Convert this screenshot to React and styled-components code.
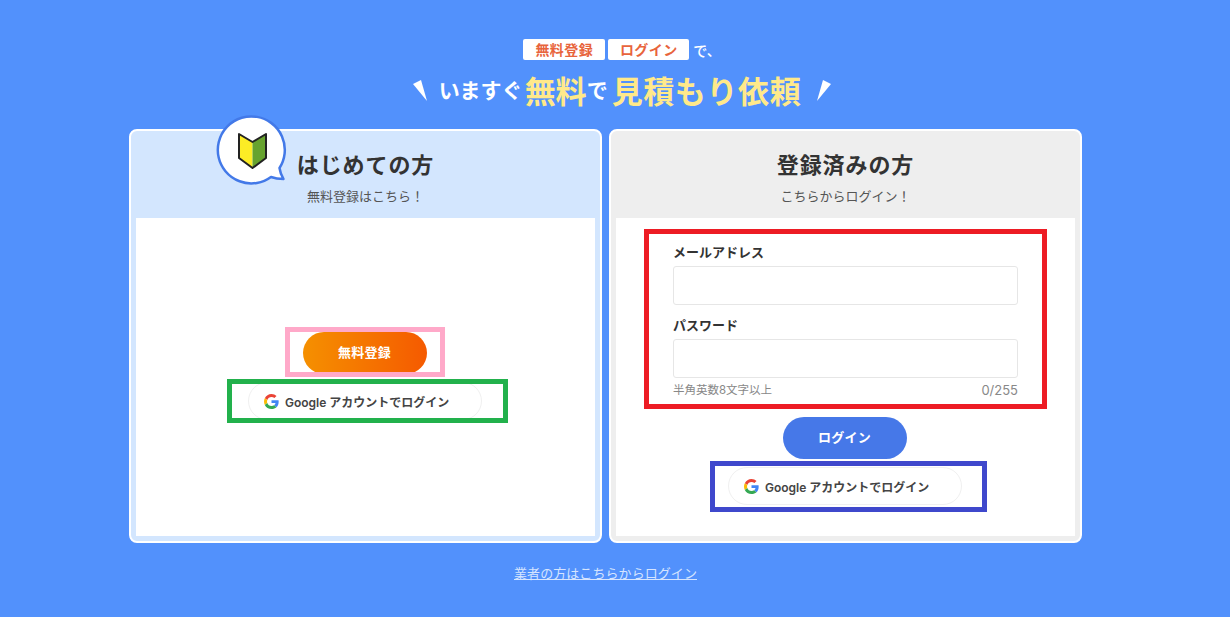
import styled, { createGlobalStyle } from 'styled-components';

const GlobalStyle = createGlobalStyle`
  html, body {
    margin: 0;
    padding: 0;
    background: #5291fc;
  }
  * {
    box-sizing: border-box;
  }
  body {
    font-family: Inter, "Noto Sans CJK JP", "Noto Sans", sans-serif;
    color: #333;
  }
`;

const Page = styled.div`
  width: 1230px;
  height: 617px;
  overflow: hidden;
  padding: 39px 19px 0 0;
  display: flex;
  flex-direction: column;
  align-items: center;
`;

const Intro = styled.div`
  display: flex;
  flex-direction: column;
  align-items: center;
  margin-left: 33px;
`;

const LeadRow = styled.div`
  display: flex;
  align-items: center;
  gap: 3px;
  height: 21px;
  color: #fff;
  font-size: 14px;
  font-weight: 500;
`;

const Tag = styled.span`
  width: ${(p) => p.$width}px;
  height: 21px;
  line-height: 21px;
  background: #fff;
  border-radius: 2px;
  color: #e8643c;
  font-weight: 700;
  text-align: center;
  letter-spacing: 0.03em;
`;

const LeadSuffix = styled.span`
  margin-left: 1px;
`;

const Headline = styled.div`
  display: flex;
  align-items: center;
  height: 34px;
  margin-top: 12px;
  color: #fff;
  font-weight: 700;
  white-space: nowrap;
`;

const Small = styled.span`
  font-size: 21px;
`;

const Big = styled.span`
  font-size: 31px;
  letter-spacing: ${(p) => p.$spacing || 0}em;
  color: #ffe98a;
  margin-left: ${(p) => p.$gap || 0}px;
`;

const Spark = styled.svg`
  width: 14px;
  height: 21px;
  margin: ${(p) => (p.$right ? '3px 0 0 16px' : '3px 12px 0 0')};
`;

const Cards = styled.div`
  display: flex;
  gap: 7px;
  margin-top: 23px;
`;

const Card = styled.section`
  position: relative;
  width: 473px;
  height: 414px;
  border: 2px solid #fff;
  border-radius: 8px;
  padding: 0 5px 5px;
  background: ${(p) => p.$tint};
  display: flex;
  flex-direction: column;
`;

const CardHead = styled.header`
  height: 87px;
  padding-top: 19px;
  text-align: center;
`;

const Title = styled.h2`
  margin: 0;
  height: 30px;
  line-height: 30px;
  font-size: 22px;
  font-weight: 700;
  letter-spacing: 0.04em;
  color: #333;
`;

const Sub = styled.p`
  margin: 6px 0 0;
  font-size: 13px;
  line-height: 20px;
  color: #555;
`;

const CardBody = styled.div`
  flex: 1;
  background: #fff;
  display: flex;
  flex-direction: column;
  align-items: center;
  padding-top: ${(p) => p.$top}px;
`;

const Badge = styled.svg`
  position: absolute;
  left: 85px;
  top: -17px;
  width: 74px;
  height: 72px;
`;

const Outline = styled.div`
  flex: none;
  border: 5px solid ${(p) => p.$color};
  width: ${(p) => p.$width}px;
  height: ${(p) => p.$height}px;
  margin: ${(p) => p.$top || 0}px 0 0 ${(p) => p.$nudge || 0}px;
  overflow: hidden;
  display: flex;
  justify-content: center;
  align-items: flex-start;
`;

const PillButton = styled.button`
  flex: none;
  width: 124px;
  height: 42px;
  margin: ${(p) => p.$top || 0}px 0 0 ${(p) => p.$nudge || 0}px;
  padding: 0 0 3px;
  border: 0;
  border-radius: 21px;
  background: ${(p) => p.$fill};
  color: #fff;
  font-family: inherit;
  font-size: 13px;
  font-weight: 700;
  letter-spacing: 0.02em;
  cursor: pointer;
`;

const GoogleButton = styled.button`
  flex: none;
  width: 234px;
  height: 38px;
  margin: ${(p) => p.$top || 0}px 0 0 ${(p) => p.$shift || 0}px;
  padding: 0 0 0 15px;
  border: 1px solid #f0f0f0;
  border-radius: 19px;
  background: #fff;
  display: flex;
  align-items: center;
  gap: 6px;
  color: #444;
  font-family: inherit;
  font-size: 12px;
  font-weight: 600;
  cursor: pointer;
`;

const Fields = styled.div`
  padding: 9px 23px 0 24px;
  width: 100%;
`;

const Label = styled.label`
  display: block;
  height: 19px;
  line-height: 19px;
  font-size: 13px;
  font-weight: 700;
  color: #333;
  margin-top: ${(p) => p.$top || 0}px;
`;

const Input = styled.input`
  display: block;
  width: 345px;
  height: 39px;
  margin-top: 4px;
  border: 1px solid #e6e6e6;
  border-radius: 3px;
  background: #fff;
  outline: none;
`;

const Hint = styled.div`
  display: flex;
  justify-content: space-between;
  align-items: center;
  width: 345px;
  margin-top: 4px;
  font-size: 11.5px;
  line-height: 17px;
  color: #888;
`;

const Counter = styled.span`
  font-size: 13px;
`;

const FootLink = styled.a`
  margin-top: 21px;
  font-size: 13px;
  line-height: 19px;
  letter-spacing: 0.07px;
  color: #d5e4ff;
  text-decoration: underline;
`;

function GoogleMark() {
  return (
    <svg width="15" height="15" viewBox="0 0 48 48">
      <path fill="#EA4335" d="M24 9.500c3.500 0 6.700 1.200 9.200 3.600l6.900-6.900C35.900 2.400 30.500 0 24 0 14.600 0 6.500 5.400 2.600 13.200l8 6.200C12.500 13.600 17.800 9.500 24 9.500z" />
      <path fill="#4285F4" d="M46.900 24.500c0-1.600-.1-3.100-.4-4.500H24v9h12.900c-.6 3-2.200 5.500-4.700 7.200l7.700 6c4.500-4.200 7-10.300 7-17.700z" />
      <path fill="#FBBC05" d="M10.500 28.600c-.5-1.400-.8-3-.8-4.600s.3-3.200.8-4.600l-8-6.200C.9 16.500 0 20.100 0 24s.9 7.500 2.600 10.800l7.900-6.200z" />
      <path fill="#34A853" d="M24 48c6.500 0 11.900-2.100 15.900-5.800l-7.700-6c-2.200 1.400-4.900 2.300-8.200 2.300-6.200 0-11.500-4.200-13.400-9.900l-8 6.200C6.500 42.600 14.600 48 24 48z" />
    </svg>
  );
}

function BeginnerBadge() {
  return (
    <Badge viewBox="0 0 74 72">
      <path
        d="M55 63A33.500 33.500 0 1 1 63.500 54C64 58 65.500 61.500 67.500 65C63 65 59 64.500 55 63z"
        fill="#fff"
        stroke="#4379e8"
        strokeWidth="2.500"
        strokeLinejoin="round"
      />
      <path d="M36.500 28 23 20v24l13.500 10z" fill="#fcec25" />
      <path d="M36.500 28 50 20v24L36.500 54z" fill="#67a32f" />
      <path d="M36.500 28 23 20v24l13.500 10L50 44V20z" fill="none" stroke="#222" strokeWidth="2" strokeLinejoin="round" />
    </Badge>
  );
}

export default function App() {
  return (
    <Page>
      <GlobalStyle />
      <Intro>
        <LeadRow>
          <Tag $width={82}>無料登録</Tag>
          <Tag $width={81}>ログイン</Tag>
          <LeadSuffix>で、</LeadSuffix>
        </LeadRow>
        <Headline>
          <Spark viewBox="0 0 14 21">
            <path d="M0 4 8 0l6 21z" fill="#fff" />
          </Spark>
          <Small>いますぐ</Small>
          <Big $gap={2}>無料</Big>
          <Small>で</Small>
          <Big $gap={4} $spacing={0.02}>見積もり依頼</Big>
          <Spark $right viewBox="0 0 14 21">
            <path d="M14 4 6 0 0 21z" fill="#fff" />
          </Spark>
        </Headline>
      </Intro>
      <Cards>
        <Card $tint="#d3e6fe">
          <BeginnerBadge />
          <CardHead>
            <Title>はじめての方</Title>
            <Sub>無料登録はこちら！</Sub>
          </CardHead>
          <CardBody $top={109}>
            <Outline $color="#ffa9c9" $width={160} $height={50} $nudge={-2}>
              <PillButton $fill="linear-gradient(90deg, #f59000, #f55a00)">無料登録</PillButton>
            </Outline>
            <Outline $color="#22b14c" $width={281} $height={44} $top={2} $nudge={4}>
              <GoogleButton $shift={-5} $top={-2}>
                <GoogleMark />
                Google アカウントでログイン
              </GoogleButton>
            </Outline>
          </CardBody>
        </Card>
        <Card $tint="#eeeeee">
          <CardHead>
            <Title>登録済みの方</Title>
            <Sub>こちらからログイン！</Sub>
          </CardHead>
          <CardBody $top={11}>
            <Outline $color="#ed1c24" $width={403} $height={180}>
              <Fields>
                <Label>メールアドレス</Label>
                <Input type="email" />
                <Label $top={11}>パスワード</Label>
                <Input type="password" />
                <Hint>
                  <span>半角英数8文字以上</span>
                  <Counter>0/255</Counter>
                </Hint>
              </Fields>
            </Outline>
            <PillButton $fill="#4678e8" $top={8} $nudge={-2}>ログイン</PillButton>
            <Outline $color="#3f48cc" $width={277} $height={51} $top={2} $nudge={6}>
              <GoogleButton $shift={-7} $top={1}>
                <GoogleMark />
                Google アカウントでログイン
              </GoogleButton>
            </Outline>
          </CardBody>
        </Card>
      </Cards>
      <FootLink href="#vendor">業者の方はこちらからログイン</FootLink>
    </Page>
  );
}
